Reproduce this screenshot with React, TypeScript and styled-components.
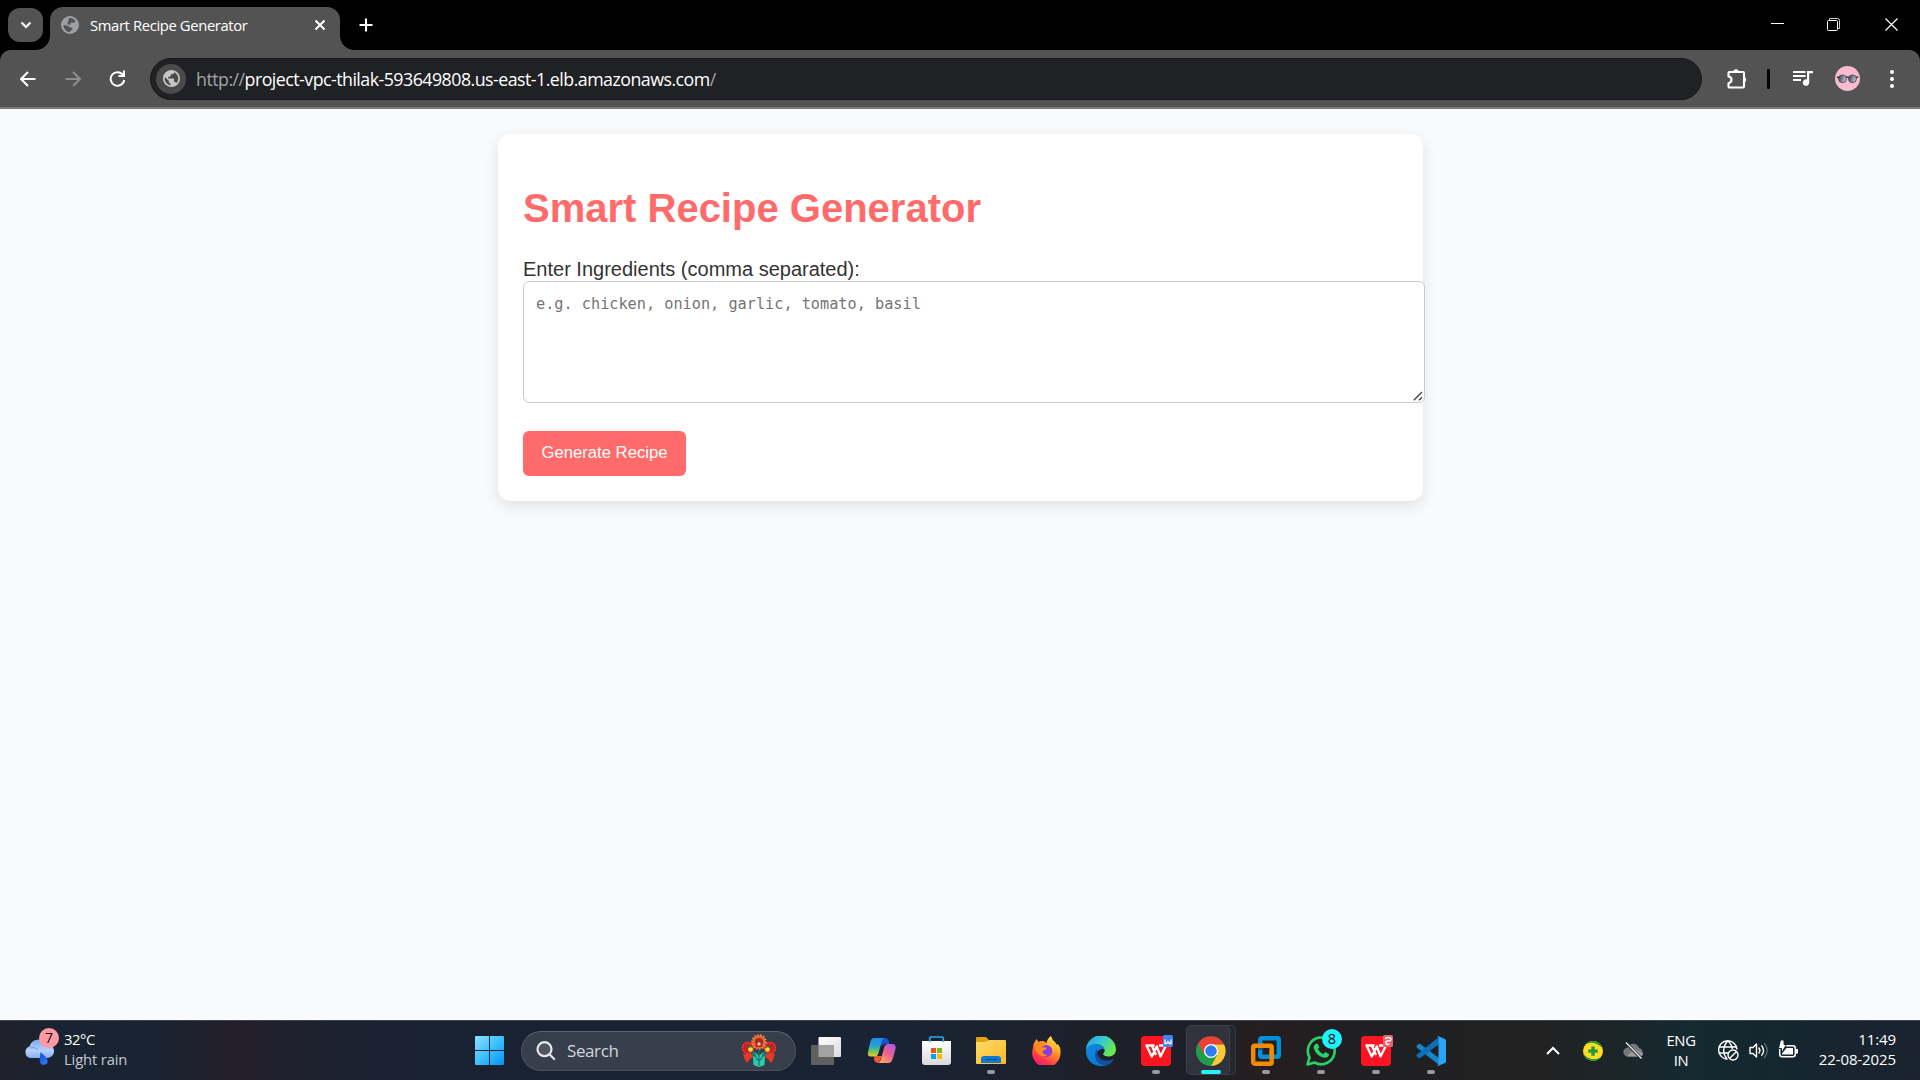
import React from 'react';
import styled, { createGlobalStyle } from 'styled-components';

const ui = `'Open Sans', 'Noto Sans', sans-serif`;
const arial = `'Liberation Sans', Arial, sans-serif`;

const GlobalStyle = createGlobalStyle`
  html, body { margin: 0; padding: 0; overflow: hidden; }
  svg { display: block; flex: none; }
`;

const Screen = styled.div`
  width: 1920px;
  height: 1080px;
  display: flex;
  flex-direction: column;
  background: #f8fafc;
  overflow: hidden;
`;

/* ---------- browser ---------- */

const TabStrip = styled.header`
  height: 50px;
  display: flex;
  background: #000;
  flex: none;
`;

const TabSearch = styled.button`
  width: 35px;
  height: 34px;
  margin: 8px 7px 0 8px;
  padding: 0;
  border: 0;
  border-radius: 12px;
  background: #535353;
  display: flex;
  align-items: center;
  justify-content: center;
`;

const Tab = styled.div`
  position: relative;
  box-sizing: border-box;
  width: 290px;
  height: 43px;
  margin-top: 7px;
  padding: 0 13px 7px 11px;
  border-radius: 13px 13px 0 0;
  background: #535353;
  display: flex;
  align-items: center;
  &::before, &::after {
    content: '';
    position: absolute;
    bottom: 0;
    width: 14px;
    height: 14px;
  }
  &::before { left: -14px; background: radial-gradient(circle at 0 0, transparent 13.5px, #535353 14.2px); }
  &::after { right: -14px; background: radial-gradient(circle at 100% 0, transparent 13.5px, #535353 14.2px); }
`;

const TabTitle = styled.span`
  flex: 1;
  margin-left: 11px;
  font: 14.8px/20px ${ui};
  letter-spacing: -0.37px;
  color: #fff;
  white-space: nowrap;
`;

const NewTab = styled.div`
  margin: 18px 0 0 19px;
`;

const WindowControls = styled.div`
  margin-left: auto;
  display: flex;
  height: 49px;
`;

const WindowControl = styled.div`
  width: 57px;
  display: flex;
  align-items: center;
  justify-content: center;
`;

const ToolbarBack = styled.div`
  background: #000;
  flex: none;
`;

const Toolbar = styled.nav`
  box-sizing: border-box;
  height: 59px;
  border-bottom: 2px solid #7c7878;
  border-radius: 11px 11px 0 0;
  background: #535353;
  display: flex;
  align-items: center;
`;

const NavButton = styled.div<{ $w: number }>`
  width: ${p => p.$w}px;
  display: flex;
  justify-content: center;
`;

const AddressBar = styled.div`
  box-sizing: border-box;
  width: 1552px;
  height: 42px;
  margin-left: 5px;
  padding-left: 5px;
  border: 1px solid #17181a;
  border-radius: 21px;
  background: #202124;
  display: flex;
  align-items: center;
`;

const SiteInfo = styled.div`
  width: 30px;
  height: 30px;
  border-radius: 50%;
  background: #4b4b4c;
  display: flex;
  align-items: center;
  justify-content: center;
`;

const Url = styled.span`
  margin: 1px 0 0 10px;
  font: 17.8px/24px ${ui};
  letter-spacing: -0.52px;
  color: #fff;
  white-space: nowrap;
`;

const Muted = styled.span`
  color: #a3a4a6;
`;

const ToolbarEnd = styled.div`
  flex: 1;
  display: flex;
  align-items: center;
`;

const Divider = styled.div`
  width: 3px;
  height: 20px;
  margin: 0 23px 0 -6px;
  border-radius: 1px;
  background: #050505;
`;

/* ---------- page ---------- */

const Page = styled.main`
  flex: 1;
  padding-top: 25px;
  font-family: ${arial};
  color: #333;
`;

const Card = styled.section`
  box-sizing: border-box;
  width: 925px;
  height: 367px;
  margin: 0 auto 0 498px;
  padding: 25px;
  border-radius: 12.5px;
  background: #fff;
  box-shadow: 0 5px 15px rgba(0, 0, 0, 0.1);
  display: flex;
  flex-direction: column;
  align-items: flex-start;
`;

const Heading = styled.h1`
  margin: 26px 0 27px;
  font-size: 40px;
  line-height: 46px;
  font-weight: 700;
  color: #ff6b6b;
  white-space: nowrap;
`;

const Label = styled.label`
  font-size: 20px;
  line-height: 23px;
  white-space: nowrap;
`;

const Field = styled.div`
  position: relative;
  height: 122px;
  margin-bottom: 28px;
`;

const Grip = styled.svg`
  position: absolute;
  right: 2px;
  bottom: 2px;
`;

const Ingredients = styled.textarea`
  display: block;
  box-sizing: border-box;
  width: 902px;
  height: 122px;
  margin: 0;
  padding: 12px 12px;
  border: 1px solid #ccc;
  border-radius: 6px;
  background: #fff;
  font: 15.23px/20px 'DejaVu Sans Mono', monospace;
  resize: none;
  &::placeholder { color: #757575; }
`;

const Generate = styled.button`
  width: 163px;
  height: 45px;
  padding: 0 0 2px;
  border: 0;
  border-radius: 6px;
  background: #ff6b6b;
  color: #fff;
  font: 16.67px/20px ${arial};
  white-space: nowrap;
`;

/* ---------- taskbar ---------- */

const Taskbar = styled.footer`
  box-sizing: border-box;
  height: 60px;
  flex: none;
  border-top: 1px solid #3c464c;
  background: linear-gradient(90deg, #1f2129 0, #182433 80px, #192332 150px, #241f29 235px, #1c2230 330px,
    #182233 470px, #192334 900px, #1e2028 1110px, #1d2029 1190px, #261e20 1260px, #1f2023 1390px, #222121 1530px,
    #152930 1690px, #14272f 1760px, #1a2230 1920px);
  display: flex;
  align-items: center;
  color: #fff;
  font-family: ${ui};
`;

const Weather = styled.div`
  width: 439px;
  padding-left: 23px;
  display: flex;
  align-items: center;
`;

const WeatherIcon = styled.div`
  position: relative;
  width: 35px;
  height: 38px;
  padding-bottom: 6px;
`;

const AlertCount = styled.span`
  position: absolute;
  left: 16px;
  top: -1px;
  width: 20px;
  height: 20px;
  border-radius: 50%;
  background: #ff99a4;
  color: #111;
  text-align: center;
  font: 14px/20px ${ui};
`;

const WeatherText = styled.div`
  margin: 0 0 3px 6px;
  font-size: 14.8px;
  line-height: 20px;
  letter-spacing: -0.4px;
  white-space: nowrap;
`;

const Condition = styled.div`
  color: #c3c8ce;
  letter-spacing: -0.15px;
`;

const Slot = styled.div`
  position: relative;
  width: 55px;
  height: 59px;
  display: flex;
  align-items: center;
  justify-content: center;
`;

const ActiveFrame = styled.div`
  position: absolute;
  left: 2.5px;
  top: 4px;
  width: 44px;
  height: 50px;
  box-sizing: border-box;
  border: 1px solid #3d3f47;
  border-radius: 5px;
  background: #31333c;
  box-shadow: 6px 0 0 -1px #26282f, 6px 0 0 0 #383a41;
`;

const Layer = styled.div`
  position: relative;
`;

const Running = styled.div<{ $active?: boolean }>`
  position: absolute;
  bottom: 6px;
  left: 50%;
  width: ${p => (p.$active ? 20 : 8)}px;
  height: 4px;
  transform: translateX(-50%);
  border-radius: 2px;
  background: ${p => (p.$active ? '#29f0ff' : '#96999e')};
`;

const Badge = styled.span`
  position: absolute;
  left: 28.5px;
  top: 8px;
  width: 20px;
  height: 20px;
  border-radius: 50%;
  background: #1cf3ff;
  color: #111;
  text-align: center;
  font: 14.5px/20px ${ui};
`;

const SearchBox = styled.div`
  box-sizing: border-box;
  width: 275px;
  height: 40px;
  margin: 0 2.5px 0 4px;
  padding: 0 18px 0 14px;
  border: 1px solid #4a525e;
  border-top-color: #5f6671;
  border-radius: 20px;
  background: #383f4c;
  display: flex;
  align-items: center;
`;

const SearchText = styled.span`
  flex: 1;
  margin-left: 11px;
  font-size: 17px;
  line-height: 22px;
  letter-spacing: -0.4px;
  color: #d3d6da;
`;

const Tray = styled.div`
  margin-left: auto;
  padding-right: 24px;
  display: flex;
  align-items: center;
`;

const Language = styled.div`
  width: 40px;
  margin: 0 17px 1px 19px;
  text-align: center;
  font-size: 14.8px;
  line-height: 20px;
  letter-spacing: -0.3px;
`;

const Clock = styled.div`
  width: 97px;
  margin-bottom: 3px;
  text-align: right;
  font-size: 15px;
  line-height: 20px;
  letter-spacing: -0.1px;
  white-space: nowrap;
`;

const TrayIcon = styled.div<{ $w: number }>`
  width: ${p => p.$w}px;
  display: flex;
  justify-content: center;
`;

/* ---------- drawings ---------- */

const TabGlobe = () => (
  <svg width="18" height="18" viewBox="0 0 18 18">
    <circle cx="9" cy="9" r="9" fill="#9aa0a6" />
    <path d="M7.500 2.300Q12 1.300 14.500 5q-.3 2-2.500 1.700-2.500-.6-2.600.8.200 1.200-1.700 1.200Q5.500 8 7 6q1-1.800.5-3.700z" fill="#535353" />
    <path d="M2.200 9.300q3-.4 5.300 1 .8 1.300 3.200 1.400 1.600.8.300 2.200-1.800.1-2.300 2.300Q3.500 15.500 2.200 9.300z" fill="#535353" />
  </svg>
);

const SiteGlobe = () => (
  <svg width="17" height="17" viewBox="2 2 20 20">
    <path fill="#c7c7c8" d="M12 2C6.480 2 2 6.480 2 12s4.480 10 10 10 10-4.480 10-10S17.520 2 12 2zM4 12c0-.61.080-1.210.21-1.780L8.990 15v1c0 1.100.9 2 2 2v1.930C7.060 19.430 4 16.070 4 12zm13.890 5.400c-.26-.81-1-1.400-1.900-1.400h-1v-3c0-.55-.45-1-1-1h-6v-2h2c.55 0 1-.45 1-1V7h2c1.100 0 2-.9 2-2v-.41C17.920 5.770 20 8.650 20 12c0 2.080-.81 3.980-2.110 5.400z" />
  </svg>
);

const Arrow = ({ color, flip }: { color: string; flip?: boolean }) => (
  <svg width="16" height="16" viewBox="0 0 16 16" fill="none" stroke={color} strokeWidth="2">
    <path d={flip ? 'M.5 8H14.500M8 1l7 7-7 7' : 'M15.500 8H1.500M8 1L1 8l7 7'} />
  </svg>
);

const Reload = () => (
  <svg width="17" height="17" viewBox="0 0 17 17">
    <path d="M14 5A6.800 6.800 0 1 0 15.200 10" fill="none" stroke="#fff" strokeWidth="2" />
    <path d="M16 .5V7H9.500V5h4.500V.5z" fill="#fff" />
  </svg>
);

const Puzzle = () => (
  <svg width="22" height="22" viewBox="0 0 22 22">
    <path d="M2.500 4h13.500q1 0 1 1v13.500q0 1-1 1H2.500q-1 0-1-1v-3.300c4-.8 4-6 0-6.800V5q0-1 1-1z" fill="none" stroke="#fff" strokeWidth="2.100" strokeLinejoin="round" />
    <path d="M6.300 4a2.700 2.700 0 0 1 5.400 0zM17 9a2.800 2.800 0 0 1 0 5.500z" fill="#fff" />
  </svg>
);

const Playlist = () => (
  <svg width="20" height="17" viewBox="0 0 20 17" fill="#fff">
    <path d="M0 1h12.500v2H0zM0 5h12.500v2H0zM0 9h8v2H0z" />
    <path d="M14 1h6v2.300h-3.800v9.200a3.200 3.200 0 1 1-2.200-3z" />
  </svg>
);

const Avatar = () => (
  <svg width="25" height="25" viewBox="0 0 25 25">
    <defs>
      <linearGradient id="lens" x2="1" y2=".3"><stop stopColor="#303840" /><stop offset="1" stopColor="#b5c7ce" /></linearGradient>
    </defs>
    <circle cx="12.500" cy="12.500" r="12.500" fill="#f8bbd0" />
    <path d="M1.800 11.300h4M19.200 11.300h4M11 11.500q1.500-1.200 3 0" stroke="#3c3034" strokeWidth="1.500" fill="none" />
    <circle cx="7.500" cy="12.800" r="3.900" fill="url(#lens)" stroke="#4d3e45" strokeWidth=".8" />
    <circle cx="17.500" cy="12.800" r="3.900" fill="url(#lens)" stroke="#4d3e45" strokeWidth=".8" />
  </svg>
);

const Cloud = () => (
  <svg width="31" height="28" viewBox="0 0 31 28" style={{ marginTop: 9 }}>
    <defs>
      <linearGradient id="cl" x2="0" y2="1"><stop stopColor="#7fa6ef" /><stop offset=".6" stopColor="#b6d2fb" /><stop offset="1" stopColor="#86aef4" /></linearGradient>
      <linearGradient id="drop" x2=".5" y2="1"><stop stopColor="#0f47c9" /><stop offset="1" stopColor="#2a78ff" /></linearGradient>
    </defs>
    <path d="M7 20a6 6 0 0 1-.5-11.500A9 9 0 0 1 23 6a7 7 0 0 1 2 14z" fill="url(#cl)" />
    <path d="M6.500 10q5-2 8.500 2" stroke="#6f9bed" fill="none" />
    <path d="M17.500 14c1.500 2 7 5 7 8.500a3.800 3.800 0 0 1-7.600 1c-.5-3 .6-6 .6-9.500z" fill="url(#drop)" />
  </svg>
);

const Windows = () => (
  <svg width="29" height="29" viewBox="0 0 29 29">
    <defs>
      <linearGradient id="win" x2="1" y2="1"><stop stopColor="#8ae2ff" /><stop offset=".5" stopColor="#3cc0fd" /><stop offset="1" stopColor="#0593f9" /></linearGradient>
    </defs>
    <path d="M1 0h13v14H0V1q0-1 1-1zM15 0h13q1 0 1 1v13H15zM0 15h14v14H1q-1 0-1-1zM15 15h14v13q0 1-1 1H15z" fill="url(#win)" />
  </svg>
);

const SearchGlass = () => (
  <svg width="20" height="20" viewBox="0 0 20 20" fill="none" stroke="#e4e6e9" strokeWidth="2.200" strokeLinecap="round">
    <circle cx="8.500" cy="8.200" r="7" fill="#515762" /><path d="M13.700 13.500l4.500 4.500" />
  </svg>
);

const Folk = () => (
  <svg width="36" height="34" viewBox="0 0 36 34">
    {[-1, 1].map(s => (
      <g key={s} transform={s > 0 ? 'translate(36 0) scale(-1 1)' : undefined}>
        <circle cx="7" cy="14" r="6.500" fill="#c6202b" />
        <circle cx="7" cy="14" r="5.400" fill="none" stroke="#ef4b3c" strokeWidth="1.300" strokeDasharray="1.500 1.200" />
        <path d="M6 12l4-1 2 6-5-1z" fill="#5c5a3c" />
        <circle cx="9.500" cy="15.500" r="2.300" fill="#ffe12b" />
        <path d="M2 20l9 0 1 3-3 2-3 4-2-3z" fill="#e53a26" />
        <path d="M11.500 16l6.500 6v11l-5-2-1-5 .5-4-3-2 2.500-1z" fill="#157f78" />
        <path d="M18 33l-5.500-2-.5-9 4 2-2-6 4 4z" fill="#31c7a9" />
      </g>
    ))}
    <path d="M18 16v16M18 27l-3-3M18 27l3-3" stroke="#137a72" strokeWidth="1.200" fill="none" />
    <circle cx="18" cy="8" r="6.600" fill="#e8662e" />
    <circle cx="18" cy="8" r="6.800" fill="none" stroke="#f58a4e" strokeWidth="2" strokeDasharray="1.600 1.400" />
    <path d="M14 8a4 4 0 0 1 8 0l-1 5h-6z" fill="#a62a20" />
    <circle cx="18" cy="10" r="1.700" fill="#f6c9a0" />
  </svg>
);

const TaskView = () => (
  <svg width="30" height="28" viewBox="0 0 30 28">
    <defs><linearGradient id="tv" x2="1" y2="1"><stop stopColor="#fff" /><stop offset="1" stopColor="#dcdcdc" /></linearGradient></defs>
    <rect x="7.500" width="22.500" height="20" rx="1" fill="url(#tv)" />
    <rect y="8" width="23" height="20" rx="1" fill="#5f5f60" />
    <path d="M7.500 8H23v12H7.500z" fill="#a2a2a2" />
  </svg>
);

const Copilot = () => (
  <svg width="29" height="27" viewBox="0 0 29 27">
    <defs>
      <linearGradient id="cpa" x2="0" y2="1"><stop stopColor="#1d8df0" /><stop offset=".45" stopColor="#27a4c9" /><stop offset=".75" stopColor="#7ac74f" /><stop offset="1" stopColor="#f5c62c" /></linearGradient>
      <linearGradient id="cpb" x1="1" x2=".2" y2="1"><stop stopColor="#a35af0" /><stop offset=".5" stopColor="#eb5f92" /><stop offset="1" stopColor="#ffae5e" /></linearGradient>
    </defs>
    <path d="M12 1h6q3 0 3.700 3l.8 3H18q-3 0-4 3z" fill="#1751d4" />
    <path d="M7.500 19h7.500L12 25.500q-4 1-5-3z" fill="#e85a34" />
    <path d="M7 1h11q-2.500 0-3.500 4l-3 11q-1 3.500-4 3.500H4Q0 19.500 1 15L3.500 4Q4.500 1 7 1z" fill="url(#cpa)" />
    <path d="M21 7h4q4.500 0 3.500 5L26 21q-1.500 5-4.500 5H10q3 0 4-4l3-11q1-4 4-4z" fill="url(#cpb)" />
  </svg>
);

const Store = () => (
  <svg width="29" height="30" viewBox="0 0 29 30">
    <defs><linearGradient id="st" x2="0" y2="1"><stop stopColor="#fff" /><stop offset="1" stopColor="#dadada" /></linearGradient></defs>
    <path d="M0 5h29v21q0 3-3 3H3q-3 0-3-3z" fill="url(#st)" />
    <path d="M7.700 6V2.500q0-1.500 1.500-1.500h10.600q1.500 0 1.500 1.500V6" fill="none" stroke="#25b0ea" strokeWidth="1.700" />
    <path d="M9 12h5v5H9z" fill="#f25022" /><path d="M15 12h5v5h-5z" fill="#7fba00" />
    <path d="M9 18h5v5H9z" fill="#00a4ef" /><path d="M15 18h5v5h-5z" fill="#ffb900" />
  </svg>
);

const Folder = () => (
  <svg width="30" height="27" viewBox="0 0 30 27">
    <defs><linearGradient id="fo" x2="1" y2="1"><stop stopColor="#ffdc67" /><stop offset="1" stopColor="#fdb72b" /></linearGradient></defs>
    <path d="M0 1q0-1 1-1h9l3 3h-1v5H0z" fill="#e0a20b" />
    <path d="M0 5h9l4-2h16q1 0 1 1v22q0 1-1 1H1q-1 0-1-1z" fill="url(#fo)" />
    <path d="M5 26v-4q0-3 3-3h14q3 0 3 3v4z" fill="#0f79cf" />
    <path d="M9 22.500h12" stroke="#07508e" strokeWidth="1.200" />
  </svg>
);

const Firefox = () => (
  <svg width="29" height="29" viewBox="0 0 29 29">
    <defs>
      <linearGradient id="ffa" x1=".8" x2=".25" y2="1"><stop stopColor="#fff04a" /><stop offset=".4" stopColor="#ff9a27" /><stop offset=".75" stopColor="#ff3a47" /><stop offset="1" stopColor="#e8127d" /></linearGradient>
      <radialGradient id="ffb"><stop stopColor="#6b46ef" /><stop offset="1" stopColor="#a632d2" /></radialGradient>
    </defs>
    <path d="M2 7L4.500 3l2 3q3-1.500 5-1L14.500 7q1-5 4.500-7 1 4 4 6l2 3 1-1q3 4 2.500 8.500A14.200 14.200 0 1 1 1 12q0-3 1-5z" fill="url(#ffa)" />
    <circle cx="14.500" cy="15" r="5.900" fill="url(#ffb)" />
    <path d="M3 10q3-5 8-5l3 3q-4 1-4 3.500h4.500q0 2-4 3.500 0 4 5 4-5 3-9-1T3 10z" fill="#ff8a1f" />
    <path d="M17 9q5 2 4 8 2-3 1-7-2-3-5-3z" fill="#ffbf30" />
  </svg>
);

const Edge = () => (
  <svg width="30" height="30" viewBox="0 0 30 30">
    <defs>
      <linearGradient id="eda" x2="1" y2=".5"><stop stopColor="#1ea2e5" /><stop offset=".5" stopColor="#35c6d5" /><stop offset="1" stopColor="#6be850" /></linearGradient>
      <linearGradient id="edb" x2=".8" y2="1"><stop stopColor="#1288dd" /><stop offset="1" stopColor="#0877d6" /></linearGradient>
    </defs>
    <path d="M0 15A15 15 0 0 1 30 13.500c0 4.500-3.500 7-7.500 7-3.500 0-5.500-1.300-5.500-2.500s1.500-1.500 1.500-4c0-3-3.500-5.500-7.500-5.500C5 8.500 0 12 0 15z" fill="url(#eda)" />
    <path d="M0 15.500C0 10 5 8 10 8c4.500 0 8.500 3 8.500 6.500-5-3-9.500 2-7 7.500s8 7 11 6.500C13 33 0 27.500 0 15.500z" fill="url(#edb)" />
    <path d="M12 13c-3 7 3 14 14 10.500q2-.7 1.700.2C24 30 17 31 12.500 27S8 15 12 13z" fill="#124f9e" />
    <path d="M18.500 14.500c0 2-1.500 2.500-1.500 3.700 0 1 1.300 1.700 3 2.100q-5 1-6-2.500t2-5q2-.5 2.500 1.700z" fill="#1d2029" />
  </svg>
);

const Wps = ({ pdf }: { pdf?: boolean }) => (
  <svg width="32" height="32" viewBox="0 0 32 32" style={{ marginLeft: 2, marginTop: -2 }}>
    <rect y="2" width="30" height="30" rx="4" fill="#fb1521" />
    <path d="M4.500 11.500h9M5.500 11.500l5.300 11 5-10M15.500 11.500l4 11 5.500-11h-7M11 12l4 9" fill="none" stroke="#fff" strokeWidth="2.300" strokeLinejoin="round" />
    <rect x="22" y="1" width="10" height="12" rx="1.500" fill={pdf ? '#e4646b' : '#3f86f4'} />
    {pdf
      ? <path d="M24.500 5q0-1.500 3-1.500t2.500 2-3 1.500-2 2 3.500.8" fill="none" stroke="#fff" strokeWidth="1.300" />
      : <path d="M24 5.500v4h1.800l1.200-2 1.200 2H30v-4" fill="none" stroke="#fff" strokeWidth="1.300" />}
  </svg>
);

const Chrome = () => (
  <svg width="30" height="30" viewBox="0 0 48 48">
    <path d="M24 24V36L34.400 30 24 48A24 24 0 0 1 3.200 12z" fill="#1e9d4c" />
    <path d="M24 13h20.800A24 24 0 0 1 24 48l10-18z" fill="#fcc934" />
    <path d="M3.200 12A24 24 0 0 1 44.800 13H24L13.600 30z" fill="#ea4335" />
    <circle cx="24" cy="24" r="11.200" fill="#fff" /><circle cx="24" cy="24" r="9.300" fill="#2f7cf0" />
  </svg>
);

const VMware = () => (
  <svg width="30" height="30" viewBox="0 0 30 30" fill="none" strokeWidth="4.400">
    <rect x="2.200" y="9.700" width="18.500" height="18" rx="1.500" stroke="#f38b00" />
    <rect x="9.200" y="2.200" width="18.600" height="18.500" rx="1.500" stroke="#0091da" />
    <path d="M7 9.700h6M20.700 15v9" stroke="#f38b00" /><path d="M9.200 14v-2" stroke="#17509a" />
  </svg>
);

const WhatsApp = () => (
  <svg width="30" height="30" viewBox="0 0 30 30">
    <path d="M1.500 28.500l2-7.200A13.400 13.400 0 1 1 8.600 26.500z" fill="none" stroke="#27d266" strokeWidth="2.600" strokeLinejoin="round" />
    <path d="M9.500 8q1.500-1 2.500 0l1.300 3-1.300 2q2 4 5.500 5l1.700-2 3.800 2q0 3.500-4 3.800-8.500-1-11.500-10Q7.500 9.500 9.500 8z" fill="#27d266" />
  </svg>
);

const VSCode = () => (
  <svg width="30" height="30" viewBox="0 0 30 30">
    <path d="M1 9.500l1.500-1.400q1-.6 2 .1L23 22v7L.8 11.500q-.8-1 .2-2z" fill="#1585c9" />
    <path d="M1 20.500l1.500 1.400q1 .6 2-.1L23 8V1L.8 18.500q-.8 1 .2 2z" fill="#0c6fb8" />
    <path d="M22 0l7 3q1 .5 1 1.500v21q0 1-1 1.500l-7 3q-1 0-1.700-.8Q22.500 30 22.500 28V2Q22.500 0 20.500.8 21 0 22 0z" fill="#2aa4f4" />
  </svg>
);

const Antivirus = () => (
  <svg width="20" height="20" viewBox="0 0 20 20">
    <circle cx="10" cy="10" r="10" fill="#ffdb26" />
    <path d="M2.500 3.500A10 10 0 0 1 18 4q1 1.500 1 2.500Q10-1 2.500 3.500zM17.500 16.500A10 10 0 0 1 2 16q-1-1.500-1-2.500 7.500 7.500 16.500 3z" fill="#239a37" />
    <path d="M8.300 5.500h3.400v3h3v3.200h-3v3H8.300v-3h-3V8.500h3z" fill="#239a37" />
  </svg>
);

const CloudOff = () => (
  <svg width="21" height="17" viewBox="0 0 21 17">
    <path d="M5 14.500a4.500 4.500 0 0 1-.3-9A6 6 0 0 1 16 6a4.400 4.400 0 0 1 .5 8.500z" fill="#75797b" />
    <path d="M11 7l9 4q0 3.500-3.500 3.500H4z" fill="#9b9ea0" />
    <path d="M2.500.5l16 16" stroke="#222829" strokeWidth="3" /><path d="M3 .5l15.500 16" stroke="#eee" strokeWidth="1.300" />
  </svg>
);

const NetGlobe = () => (
  <svg width="21" height="21" viewBox="0 0 21 21" fill="none" stroke="#fff" strokeWidth="1.400">
    <path d="M9.500 19.200A9.200 9.200 0 1 1 19 9.500M1.500 7h17M1.300 13H10M9 19Q5.500 15 5.700 10T10 .8Q14 5 14.200 9" />
    <circle cx="15" cy="15" r="5" /><path d="M11.500 18.500l7-7" />
  </svg>
);

const Speaker = () => (
  <svg width="20" height="17" viewBox="0 0 20 17" fill="none" stroke="#fff" strokeWidth="1.400" strokeLinecap="round">
    <path d="M1 5.500h3L7.500 2v13L4 11.500H1z" strokeLinejoin="round" /><path d="M10 6q1.800 2.500 0 5M12.800 3.800q3.400 4.700 0 9.400" />
    <path d="M15.500 1.500q5.500 7 0 14" stroke="#53666d" />
  </svg>
);

const Battery = () => (
  <svg width="21" height="18" viewBox="0 0 21 18" style={{ marginTop: -3 }}>
    <rect x="1.700" y="5.700" width="15.600" height="11" rx="2.500" fill="none" stroke="#fff" strokeWidth="1.500" />
    <path d="M8.500 8H15v6.500H4v-1z" fill="#fff" /><path d="M18 9h2v4.500h-2z" fill="#fff" />
    <path d="M2.500 0H6v4.500h2.500L3.500 13V8.500H.5z" fill="#fff" stroke="#15272e" strokeWidth="1" />
  </svg>
);

type AppEntry = { name: string; icon: React.ReactNode; running?: boolean; active?: boolean; badge?: string };

const apps: AppEntry[] = [
  { name: 'task-view', icon: <TaskView /> },
  { name: 'copilot', icon: <Copilot /> },
  { name: 'store', icon: <Store /> },
  { name: 'explorer', icon: <Folder />, running: true },
  { name: 'firefox', icon: <Firefox /> },
  { name: 'edge', icon: <Edge /> },
  { name: 'wps-writer', icon: <Wps />, running: true },
  { name: 'chrome', icon: <Chrome />, running: true, active: true },
  { name: 'vmware', icon: <VMware />, running: true },
  { name: 'whatsapp', icon: <WhatsApp />, running: true, badge: '8' },
  { name: 'wps-pdf', icon: <Wps pdf />, running: true },
  { name: 'vscode', icon: <VSCode />, running: true },
];

export default function App() {
  return (
    <Screen>
      <GlobalStyle />
      <TabStrip>
        <TabSearch>
          <svg width="12" height="8" viewBox="0 0 12 8"><path d="M1.500 1.500L6 6l4.500-4.500" fill="none" stroke="#fff" strokeWidth="2.200" /></svg>
        </TabSearch>
        <Tab>
          <TabGlobe />
          <TabTitle>Smart Recipe Generator</TabTitle>
          <svg width="14" height="14" viewBox="0 0 14 14"><path d="M2.500 2.500l9 9M11.500 2.500l-9 9" stroke="#fff" strokeWidth="2" /></svg>
        </Tab>
        <NewTab>
          <svg width="14" height="14" viewBox="0 0 14 14"><path d="M7 .5v13M.5 7h13" stroke="#fff" strokeWidth="2.100" /></svg>
        </NewTab>
        <WindowControls>
          <WindowControl><svg width="13" height="3" viewBox="0 0 13 3"><path d="M0 .5h13" stroke="#fff" /></svg></WindowControl>
          <WindowControl>
            <svg width="15" height="13" viewBox="0 0 15 13" fill="none" stroke="#fff">
              <path d="M2.500 2V.5h8q2 0 2 2v8H11" stroke="#ccc" /><rect x=".5" y="2.500" width="10" height="10" rx="1" />
            </svg>
          </WindowControl>
          <WindowControl><svg width="13" height="13" viewBox="0 0 13 13"><path d="M.5.5l12 12M12.500.5l-12 12" stroke="#fff" strokeWidth="1.200" /></svg></WindowControl>
        </WindowControls>
      </TabStrip>
      <ToolbarBack>
        <Toolbar>
          <NavButton $w={56}><Arrow color="#fff" /></NavButton>
          <NavButton $w={33}><Arrow color="#8d8d8d" flip /></NavButton>
          <NavButton $w={56}><Reload /></NavButton>
          <AddressBar>
            <SiteInfo><SiteGlobe /></SiteInfo>
            <Url><Muted>http://</Muted>project-vpc-thilak-593649808.us-east-1.elb.amazonaws.com<Muted>/</Muted></Url>
          </AddressBar>
          <ToolbarEnd>
            <NavButton $w={71}><Puzzle /></NavButton>
            <Divider />
            <Playlist />
            <NavButton $w={69}><Avatar /></NavButton>
            <NavButton $w={20}>
              <svg width="4" height="18" viewBox="0 0 4 18" fill="#fff"><circle cx="2" cy="2" r="2" /><circle cx="2" cy="9" r="2" /><circle cx="2" cy="16" r="2" /></svg>
            </NavButton>
          </ToolbarEnd>
        </Toolbar>
      </ToolbarBack>
      <Page>
        <Card>
          <Heading>Smart Recipe Generator</Heading>
          <Label htmlFor="ingredients">Enter Ingredients (comma separated):</Label>
          <Field>
            <Ingredients id="ingredients" placeholder="e.g. chicken, onion, garlic, tomato, basil" />
            <Grip width="10" height="10" viewBox="0 0 10 10"><path d="M.8 9.200L9 1M6 9.200L9 6.200" stroke="#4a4a4a" strokeWidth="1.500" /></Grip>
          </Field>
          <Generate>Generate Recipe</Generate>
        </Card>
      </Page>
      <Taskbar>
        <Weather>
          <WeatherIcon><Cloud /><AlertCount>7</AlertCount></WeatherIcon>
          <WeatherText>32°C<Condition>Light rain</Condition></WeatherText>
        </Weather>
        <Slot><Windows /></Slot>
        <SearchBox><SearchGlass /><SearchText>Search</SearchText><Folk /></SearchBox>
        {apps.map(a => (
          <Slot key={a.name}>
            {a.active && <ActiveFrame />}
            <Layer>{a.icon}</Layer>
            {a.badge && <Badge>{a.badge}</Badge>}
            {a.running && <Running $active={a.active} />}
          </Slot>
        ))}
        <Tray>
          <TrayIcon $w={16}><svg width="14" height="9" viewBox="0 0 14 9"><path d="M1 8l6-6 6 6" fill="none" stroke="#fff" strokeWidth="2" /></svg></TrayIcon>
          <TrayIcon $w={64}><Antivirus /></TrayIcon>
          <TrayIcon $w={17}><CloudOff /></TrayIcon>
          <Language>ENG<br />IN</Language>
          <TrayIcon $w={21}><NetGlobe /></TrayIcon>
          <TrayIcon $w={39}><Speaker /></TrayIcon>
          <TrayIcon $w={21}><Battery /></TrayIcon>
          <Clock>11:49<br />22-08-2025</Clock>
        </Tray>
      </Taskbar>
    </Screen>
  );
}
